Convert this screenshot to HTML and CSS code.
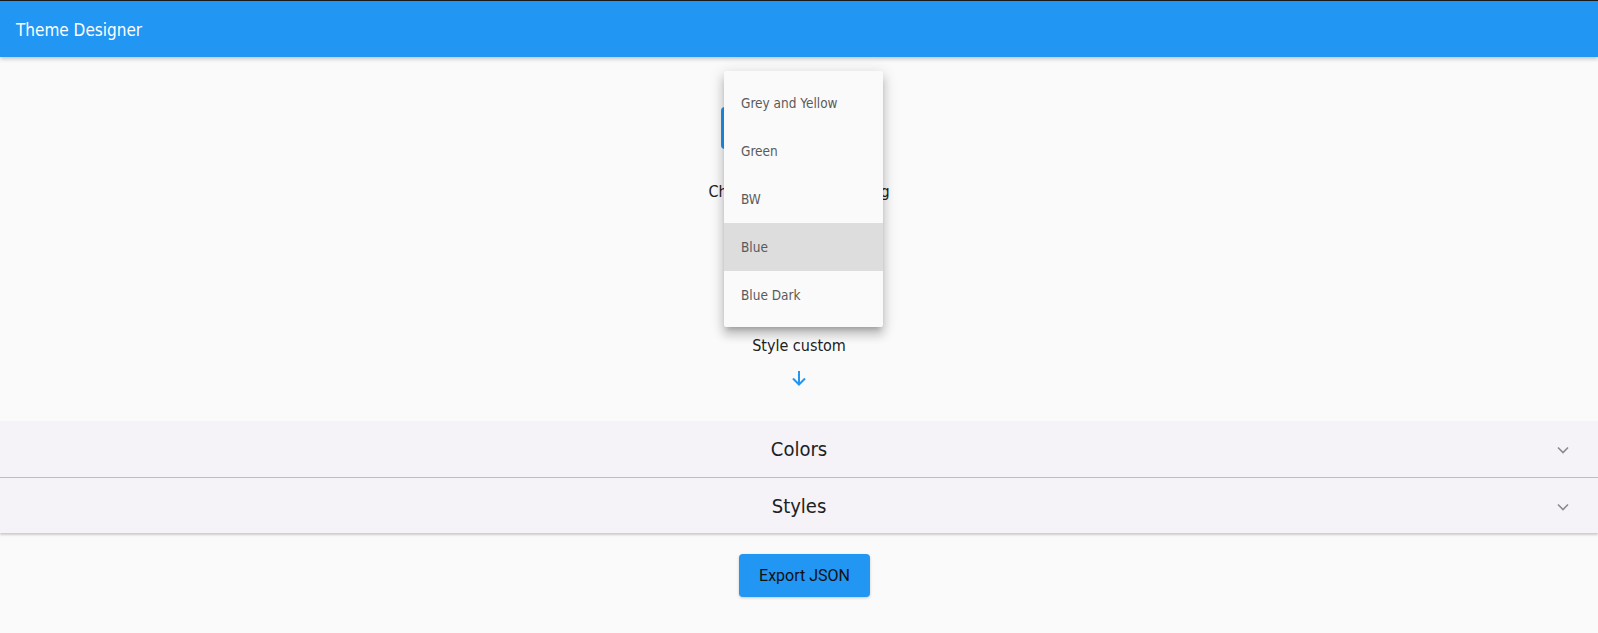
FILE: index.html
```html
<!DOCTYPE html>
<html>
<head>
<meta charset="utf-8">
<title>Theme Designer</title>
<link rel="stylesheet" href="styles.css">
</head>
<body>
<header class="toolbar"><span class="toolbar-title">Theme Designer</span></header>
<main class="content">
  <section class="picker">
    <button class="theme-select" type="button">Blue</button>
    <p class="picker-label">Choose theme for styling</p>
    <p class="custom-label">Style custom</p>
    <svg class="down-arrow" width="16" height="16" viewBox="0 0 16 16"><path d="M8 1V14.5M2 8.5L8 14.5l6-6" fill="none" stroke="#2196f3" stroke-width="2"/></svg>
  </section>
  <section class="accordion">
    <div class="panel">
      <span class="panel-title">Colors</span>
      <svg class="chevron" width="12" height="8" viewBox="0 0 12 8"><path d="M1 1.5l5 5 5-5" fill="none" stroke="#8a8a8a" stroke-width="1.6"/></svg>
    </div>
    <div class="panel">
      <span class="panel-title">Styles</span>
      <svg class="chevron" width="12" height="8" viewBox="0 0 12 8"><path d="M1 1.5l5 5 5-5" fill="none" stroke="#8a8a8a" stroke-width="1.6"/></svg>
    </div>
  </section>
  <div class="actions"><button class="export-btn" type="button">Export JSON</button></div>
</main>
<ul class="menu">
  <li class="menu-item">Grey and Yellow</li>
  <li class="menu-item">Green</li>
  <li class="menu-item">BW</li>
  <li class="menu-item active">Blue</li>
  <li class="menu-item">Blue Dark</li>
</ul>
</body>
</html>
```
FILE: styles.css
```css
html, body {
  margin: 0;
  padding: 0;
}
body {
  background: #fafafa;
  font-family: "DejaVu Sans Condensed", "Liberation Sans", sans-serif;
  color: #212121;
  border-top: 1px solid #1a1a1a;
  height: 632px;
  overflow: hidden;
  position: relative;
}
.toolbar {
  height: 56px;
  background: #2196f3;
  display: flex;
  align-items: center;
  padding: 0 16px;
  box-shadow: 0 2px 4px rgba(0,0,0,0.22);
  position: relative;
  z-index: 2;
}
.toolbar-title {
  color: #fff;
  font-size: 17px;
  padding-top: 2px;
}
.content {
  display: flex;
  flex-direction: column;
}
.picker {
  display: flex;
  flex-direction: column;
  align-items: center;
  padding-top: 50px;
}
.theme-select {
  width: 156px;
  height: 42px;
  border: none;
  border-radius: 4px;
  background: #2196f3;
  color: #fff;
}
.picker-label {
  margin: 31px 0 0;
  font-size: 16px;
  line-height: 24px;
}
.custom-label {
  margin: 130px 0 0;
  font-size: 16px;
  line-height: 24px;
}
.down-arrow {
  margin-top: 12px;
  display: block;
}
.accordion {
  margin-top: 35px;
  box-shadow: 0 2px 2px rgba(0,0,0,0.18);
}
.panel {
  height: 56px;
  background: #f5f2f8;
  display: flex;
  align-items: center;
  justify-content: center;
  position: relative;
}
.panel + .panel {
  border-top: 1px solid #90c8f6;
  height: 55px;
}
.panel-title {
  font-size: 20px;
}
.chevron {
  position: absolute;
  right: 29px;
  top: 25px;
}
.actions {
  display: flex;
  justify-content: center;
  padding-top: 21px;
}
.export-btn {
  width: 131px;
  height: 43px;
  border: none;
  border-radius: 4px;
  background: #2196f3;
  color: #111;
  font-family: Roboto, "Liberation Sans", sans-serif;
  font-size: 16px;
  box-shadow: 0 1px 3px rgba(0,0,0,0.2);
  margin-left: 11px;
}
.menu {
  position: absolute;
  left: 724px;
  top: 70px;
  width: 159px;
  margin: 0;
  padding: 8px 0;
  list-style: none;
  background: #fafafa;
  box-shadow: 0 5px 5px -3px rgba(0,0,0,0.2), 0 8px 10px 1px rgba(0,0,0,0.14), 0 3px 14px 2px rgba(0,0,0,0.12);
  border-radius: 2px;
  z-index: 5;
}
.menu-item {
  height: 48px;
  display: flex;
  align-items: center;
  padding-left: 17px;
  font-size: 13.5px;
  color: #5a5a5a;
}
.menu-item.active {
  background: #dddddd;
}
```
